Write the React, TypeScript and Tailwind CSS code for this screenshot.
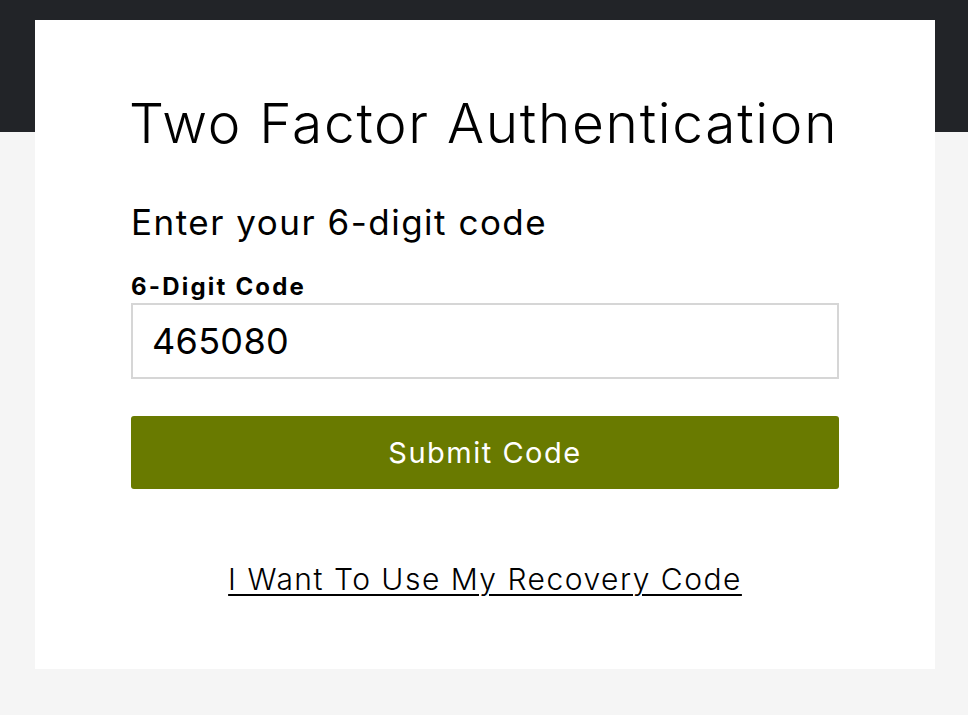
import React from "react";

export default function App() {
  const font = { fontFamily: "Inter, 'Open Sans', sans-serif" };
  return (
    <div
      className="min-h-screen w-full bg-[linear-gradient(#222428_0px,#222428_132px,#f5f5f5_132px)] pl-[35px] pr-[33px] pt-[20px] pb-[47px]"
      style={font}
    >
      <div className="bg-white px-[96px] pt-[70px] pb-[72px] text-black">
        <h1 className="-ml-[2px] text-[55px] leading-[67px] font-light tracking-[1.7px] whitespace-nowrap">
          Two Factor Authentication
        </h1>
        <p className="mt-[44px] text-[35px] leading-[42px] font-normal tracking-[1.5px] whitespace-nowrap">
          Enter your 6-digit code
        </p>
        <label className="mt-[29px] block text-[24px] leading-[29px] font-bold tracking-[2.2px]">
          6-Digit Code
        </label>
        <div className="mt-[2px] h-[76px] border-2 border-[#d6d6d6] flex items-center pl-[19px] text-[36px] tracking-[0.3px]">
          465080
        </div>
        <button className="mt-[37px] w-full h-[73px] rounded-[3px] bg-[#697a00] text-white text-[29px] tracking-[1.5px] flex items-center justify-center">
          Submit Code
        </button>
        <div className="mt-[72px] flex justify-center">
          <a
            href="#"
            className="text-[30px] leading-[36px] font-light underline decoration-2 underline-offset-[4px] tracking-[1.5px] text-black whitespace-nowrap"
          >
            I Want To Use My Recovery Code
          </a>
        </div>
      </div>
    </div>
  );
}
